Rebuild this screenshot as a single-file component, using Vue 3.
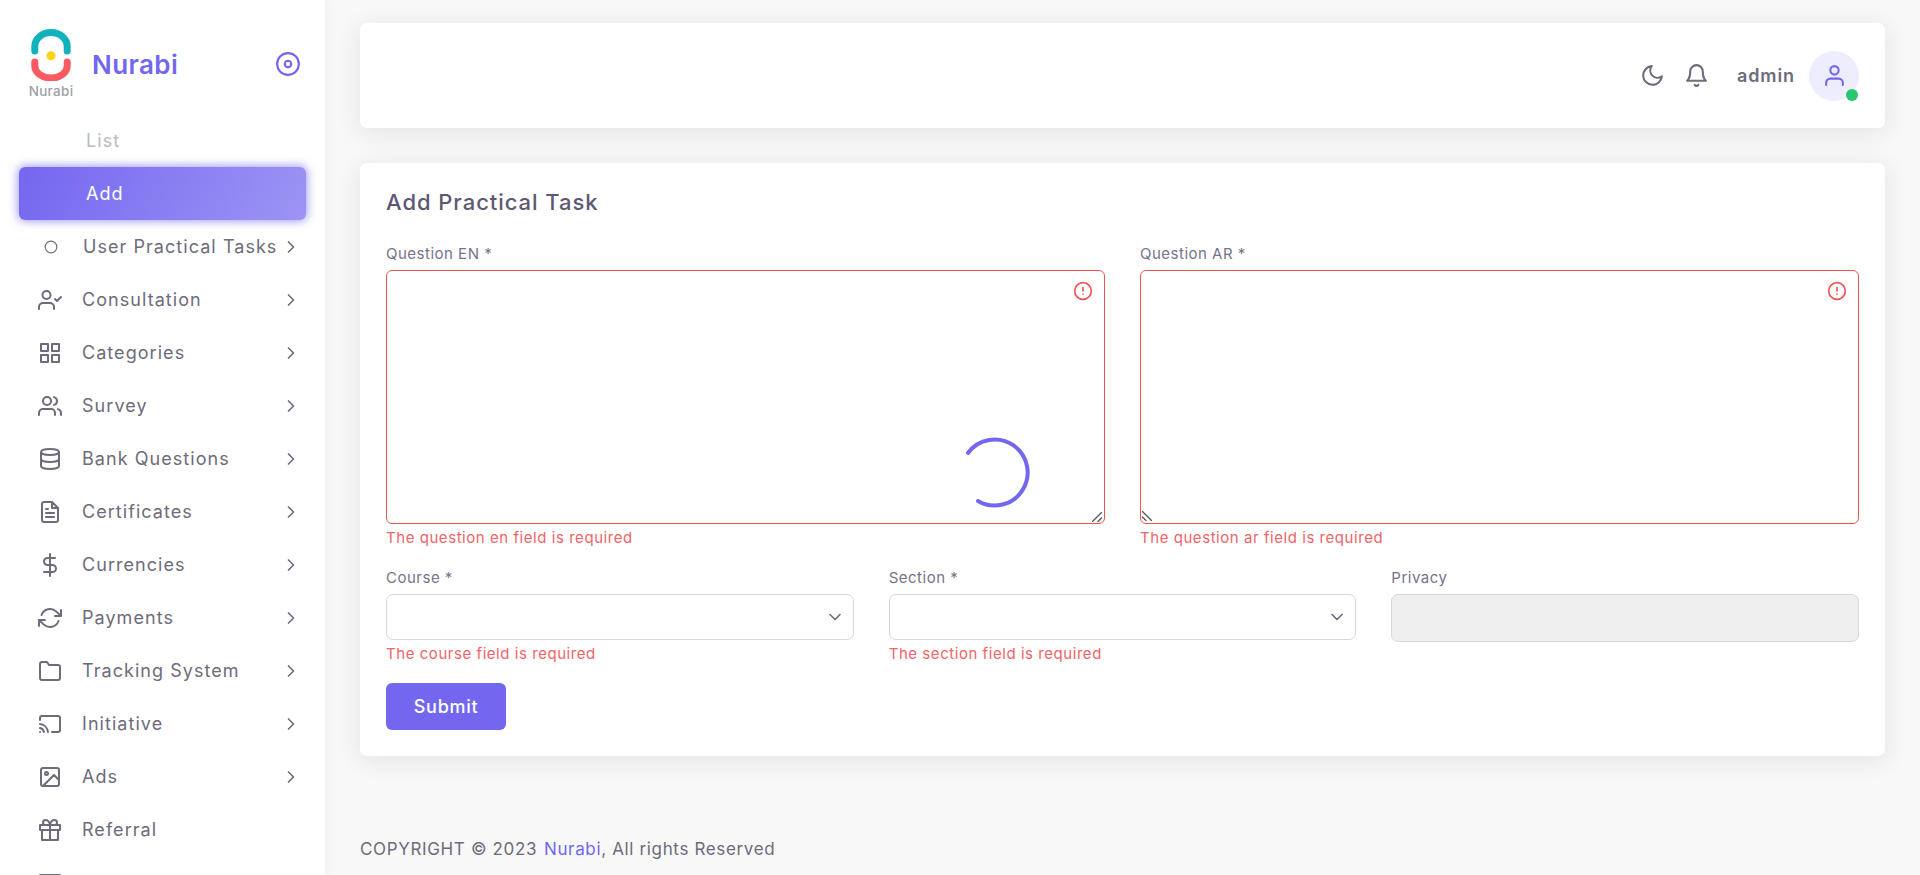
<template>
  <div class="layout">
    <aside class="sidebar">
      <div class="brand">
        <div class="brand-logo">
          <svg width="46" height="52" viewBox="0 0 46 52">
            <path d="M6.8 22V17.5a16.2 14 0 0 1 32.4 0V22" class="logo-teal" />
            <path d="M6.8 33V37a16.2 12 0 0 0 32.4 0V33" class="logo-coral" />
            <circle cx="23" cy="26.7" r="4.5" fill="#fdd31c" />
          </svg>
          <span class="logo-word">Nurabi</span>
        </div>
        <span class="brand-name">Nurabi</span>
        <svg class="brand-toggle" viewBox="0 0 24 24">
          <path :d="icons.disc" />
        </svg>
      </div>
      <ul class="menu">
        <li
          v-for="item in menu"
          :key="item.label"
          class="menu-item"
          :class="{ active: item.active, muted: item.muted, sub: item.sub }"
        >
          <svg v-if="item.icon" class="menu-icon" :class="{ small: item.small }" viewBox="0 0 24 24">
            <path :d="icons[item.icon]" />
          </svg>
          <span class="menu-label">{{ item.label }}</span>
          <svg v-if="item.arrow" class="menu-arrow" viewBox="0 0 24 24">
            <path d="M9 18l6-6-6-6" />
          </svg>
        </li>
      </ul>
    </aside>

    <main class="content">
      <header class="navbar">
        <svg class="nav-icon" viewBox="0 0 24 24"><path :d="icons.moon" /></svg>
        <svg class="nav-icon" viewBox="0 0 24 24"><path :d="icons.bell" /></svg>
        <span class="nav-user">admin</span>
        <div class="avatar">
          <svg class="avatar-icon" viewBox="0 0 24 24"><path :d="icons.user" /></svg>
          <span class="avatar-dot"></span>
        </div>
      </header>

      <section class="card">
        <h4 class="card-title">Add Practical Task</h4>
        <div class="row-two">
          <div class="field">
            <label>Question EN *</label>
            <div class="area-wrap">
              <textarea class="area"></textarea>
              <svg class="area-alert" viewBox="0 0 24 24"><path :d="icons.alert" /></svg>
              <svg class="grip" viewBox="0 0 10 10"><path d="M0 10L10 0M5.5 10L10 5.5" /></svg>
            </div>
            <small class="error">The question en field is required</small>
          </div>
          <div class="field">
            <label>Question AR *</label>
            <div class="area-wrap">
              <textarea class="area" dir="rtl"></textarea>
              <svg class="area-alert" viewBox="0 0 24 24"><path :d="icons.alert" /></svg>
              <svg class="grip grip-left" viewBox="0 0 10 10"><path d="M0 0L10 10M0 5.5L4.5 10" /></svg>
            </div>
            <small class="error">The question ar field is required</small>
          </div>
        </div>
        <div class="row-three">
          <div class="field">
            <label>Course *</label>
            <div class="select">
              <svg class="select-arrow" viewBox="0 0 24 24"><path d="M6 9l6 6 6-6" /></svg>
            </div>
            <small class="error">The course field is required</small>
          </div>
          <div class="field">
            <label>Section *</label>
            <div class="select">
              <svg class="select-arrow" viewBox="0 0 24 24"><path d="M6 9l6 6 6-6" /></svg>
            </div>
            <small class="error">The section field is required</small>
          </div>
          <div class="field">
            <label>Privacy</label>
            <div class="select disabled"></div>
          </div>
        </div>
        <button class="submit" type="button">Submit</button>
      </section>

      <footer class="footer">
        COPYRIGHT © 2023 &nbsp;<span class="footer-link">Nurabi</span>, All rights Reserved
      </footer>
    </main>

    <svg class="spinner" width="80" height="80" viewBox="-40 -40 80 80">
      <path d="M-27 -19A33 33 0 1 1 -17 29" />
    </svg>
  </div>
</template>

<script setup>
const icons = {
  disc: 'M2 12a10 10 0 1 0 20 0a10 10 0 1 0-20 0M9 12a3 3 0 1 0 6 0a3 3 0 1 0-6 0',
  circle: 'M2 12a10 10 0 1 0 20 0a10 10 0 1 0-20 0',
  userCheck: 'M16 21v-2a4 4 0 0 0-4-4H5a4 4 0 0 0-4 4v2M4.5 7a4 4 0 1 0 8 0a4 4 0 1 0-8 0M17 11l2 2 4-4',
  grid: 'M3 3h7v7H3zM14 3h7v7h-7zM14 14h7v7h-7zM3 14h7v7H3z',
  users: 'M17 21v-2a4 4 0 0 0-4-4H5a4 4 0 0 0-4 4v2M5 7a4 4 0 1 0 8 0a4 4 0 1 0-8 0M23 21v-2a4 4 0 0 0-3-3.87M16 3.13a4 4 0 0 1 0 7.75',
  database: 'M3 5c0-1.66 4-3 9-3s9 1.34 9 3s-4 3-9 3s-9-1.34-9-3M21 12c0 1.66-4 3-9 3s-9-1.34-9-3M3 5v14c0 1.66 4 3 9 3s9-1.34 9-3V5',
  file: 'M14 2H6a2 2 0 0 0-2 2v16a2 2 0 0 0 2 2h12a2 2 0 0 0 2-2V8zM14 2v6h6M16 13H8M16 17H8M10 9H8',
  dollar: 'M12 1v22M17 5H9.5a3.5 3.5 0 0 0 0 7h5a3.5 3.5 0 0 1 0 7H6',
  refresh: 'M23 4v6h-6M1 20v-6h6M3.51 9a9 9 0 0 1 14.85-3.36L23 10M1 14l4.64 4.36A9 9 0 0 0 20.49 15',
  folder: 'M22 19a2 2 0 0 1-2 2H4a2 2 0 0 1-2-2V5a2 2 0 0 1 2-2h5l2 3h9a2 2 0 0 1 2 2z',
  cast: 'M2 16.1A5 5 0 0 1 5.9 20M2 12.05A9 9 0 0 1 9.95 20M2 8V6a2 2 0 0 1 2-2h16a2 2 0 0 1 2 2v12a2 2 0 0 1-2 2h-6M2 20h.01',
  image: 'M5 3h14a2 2 0 0 1 2 2v14a2 2 0 0 1-2 2H5a2 2 0 0 1-2-2V5a2 2 0 0 1 2-2zM7 8.5a1.5 1.5 0 1 0 3 0a1.5 1.5 0 1 0-3 0M21 15l-5-5L5 21',
  gift: 'M20 12v10H4V12M2 7h20v5H2zM12 22V7M12 7H7.5a2.5 2.5 0 0 1 0-5C11 2 12 7 12 7zM12 7h4.5a2.5 2.5 0 0 0 0-5C13 2 12 7 12 7z',
  card: 'M3 4h18a2 2 0 0 1 2 2v12a2 2 0 0 1-2 2H3a2 2 0 0 1-2-2V6a2 2 0 0 1 2-2zM1 10h22',
  moon: 'M21 12.79A9 9 0 1 1 11.21 3 7 7 0 0 0 21 12.79z',
  bell: 'M18 8A6 6 0 0 0 6 8c0 7-3 9-3 9h18s-3-2-3-9M13.73 21a2 2 0 0 1-3.46 0',
  user: 'M20 21v-2a4 4 0 0 0-4-4H8a4 4 0 0 0-4 4v2M8 7a4 4 0 1 0 8 0a4 4 0 1 0-8 0',
  alert: 'M2 12a10 10 0 1 0 20 0a10 10 0 1 0-20 0M12 8v4M12 16h.01'
}

const menu = [
  { label: 'List', sub: true, muted: true },
  { label: 'Add', sub: true, active: true },
  { label: 'User Practical Tasks', icon: 'circle', small: true, arrow: true },
  { label: 'Consultation', icon: 'userCheck', arrow: true },
  { label: 'Categories', icon: 'grid', arrow: true },
  { label: 'Survey', icon: 'users', arrow: true },
  { label: 'Bank Questions', icon: 'database', arrow: true },
  { label: 'Certificates', icon: 'file', arrow: true },
  { label: 'Currencies', icon: 'dollar', arrow: true },
  { label: 'Payments', icon: 'refresh', arrow: true },
  { label: 'Tracking System', icon: 'folder', arrow: true },
  { label: 'Initiative', icon: 'cast', arrow: true },
  { label: 'Ads', icon: 'image', arrow: true },
  { label: 'Referral', icon: 'gift' },
  { label: 'Wallet', icon: 'card' }
]
</script>

<style>
html,
body {
  margin: 0;
  height: 100%;
  overflow: hidden;
  background: #f8f8f8;
}
</style>

<style scoped>
.layout {
  position: relative;
  display: flex;
  height: 875px;
  overflow: hidden;
  font-family: Inter, "Noto Sans", sans-serif;
  color: #6e6b7b;
  background: #f8f8f8;
}

svg path {
  fill: none;
  stroke: currentColor;
  stroke-width: 2;
  stroke-linecap: round;
  stroke-linejoin: round;
}

.sidebar {
  flex: 0 0 325px;
  height: 875px;
  overflow: hidden;
  background: #fff;
  box-shadow: 0 0 15px 0 rgba(34, 41, 47, 0.05);
}

.brand {
  display: flex;
  align-items: center;
  height: 114px;
  padding: 14px 24px 0 28px;
  box-sizing: border-box;
}

.brand-logo {
  display: flex;
  flex-direction: column;
  align-items: center;
  width: 46px;
}

.brand-logo svg {
  display: block;
}

svg .logo-teal {
  stroke: #10b3bb;
  stroke-width: 7;
}

svg .logo-coral {
  stroke: #fb5a60;
  stroke-width: 7;
}

.logo-word {
  margin-top: 2px;
  font-size: 13.5px;
  line-height: 16px;
  font-weight: 500;
  letter-spacing: 0.3px;
  color: #9ea1a5;
}

.brand-name {
  flex: 1;
  margin-left: 18px;
  font-size: 26px;
  font-weight: 600;
  letter-spacing: 0.4px;
  color: #7367f0;
}

.brand-toggle {
  color: #7367f0;
  width: 26px;
  height: 26px;
}

.menu {
  list-style: none;
  margin: 0;
  padding: 0;
}

.menu-item {
  display: flex;
  align-items: center;
  height: 53px;
  margin: 0 19px;
  padding: 0 5px 0 19px;
  box-sizing: border-box;
  border-radius: 6px;
  font-size: 18px;
  letter-spacing: 1.05px;
  color: #6e6b7b;
}

.menu-item.sub {
  padding-left: 67px;
}

.menu-item.muted {
  color: #b9b9c3;
}

.menu-item.active {
  color: #fff;
  background: linear-gradient(118deg, #7367f0, rgba(115, 103, 240, 0.7));
  box-shadow: 0 0 10px 1px rgba(115, 103, 240, 0.7);
}

.menu-icon {
  flex: 0 0 24px;
  width: 24px;
  height: 24px;
  margin-right: 20px;
}

.menu-icon.small {
  height: 14px;
  margin-left: 1px;
}

.menu-label {
  flex: 1;
  white-space: nowrap;
}

.menu-arrow {
  flex: 0 0 20px;
  width: 20px;
  height: 20px;
}

.content {
  flex: 1;
  min-width: 0;
  padding: 23px 35px 0;
}

.navbar {
  display: flex;
  align-items: center;
  height: 105px;
  padding: 0 26px;
  box-sizing: border-box;
  border-radius: 7px;
  background: #fff;
  box-shadow: 0 4px 24px 0 rgba(34, 41, 47, 0.1);
}

.nav-icon {
  width: 25px;
  height: 25px;
  margin-right: 19px;
  color: #6e6b7b;
}

.nav-icon:first-child {
  margin-left: auto;
}

.nav-user {
  margin-left: 9px;
  margin-right: 14px;
  font-size: 18px;
  font-weight: 600;
  letter-spacing: 0.9px;
}

.avatar {
  position: relative;
  display: flex;
  align-items: center;
  justify-content: center;
  width: 50px;
  height: 50px;
  border-radius: 50%;
  background: #eeedfd;
  color: #7367f0;
}

.avatar-icon {
  width: 25px;
  height: 25px;
}

.avatar-dot {
  position: absolute;
  right: 1px;
  bottom: 0;
  width: 12px;
  height: 12px;
  border-radius: 50%;
  background: #28c76f;
}

.card {
  margin-top: 35px;
  padding: 24px 26px 26px;
  border-radius: 7px;
  background: #fff;
  box-shadow: 0 4px 24px 0 rgba(34, 41, 47, 0.1);
}

.card-title {
  margin: 0 0 27px;
  font-size: 22px;
  line-height: 30px;
  font-weight: 450;
  letter-spacing: 0.95px;
  color: #5e5873;
}

.row-two {
  display: grid;
  grid-template-columns: 1fr 1fr;
  gap: 35px;
}

.row-three {
  display: grid;
  grid-template-columns: 1fr 1fr 1fr;
  gap: 35px;
  margin-top: 20px;
}

.field {
  min-width: 0;
}

label {
  display: block;
  margin-bottom: 6px;
  font-size: 15px;
  line-height: 20px;
  letter-spacing: 0.5px;
  color: #76738a;
}

.area-wrap {
  position: relative;
}

.area {
  display: block;
  width: 100%;
  height: 254px;
  box-sizing: border-box;
  border: 1px solid #ea5455;
  border-radius: 6px;
  outline: none;
  background: #fff;
  resize: none;
}

.area-alert {
  position: absolute;
  top: 11px;
  right: 12px;
  width: 20px;
  height: 20px;
  color: #ea5455;
}

.grip {
  position: absolute;
  right: 3px;
  bottom: 2px;
  width: 10px;
  height: 10px;
  color: #555;
}

.grip path {
  stroke-width: 1.3;
  stroke-linecap: butt;
}

.grip-left {
  left: 2px;
  right: auto;
  bottom: 3px;
}

.error {
  display: block;
  margin-top: 4px;
  font-size: 15px;
  line-height: 20px;
  letter-spacing: 0.55px;
  color: #ee6566;
}

.select {
  position: relative;
  display: flex;
  align-items: center;
  justify-content: flex-end;
  height: 46px;
  padding-right: 8px;
  box-sizing: border-box;
  border: 1px solid #d8d6de;
  border-radius: 7px;
  background: #fff;
}

.select.disabled {
  height: 48px;
  background: #efefef;
}

.select-arrow {
  width: 20px;
  height: 20px;
  color: #6e6b7b;
}

.submit {
  display: block;
  width: 120px;
  height: 47px;
  margin-top: 19px;
  border: 0;
  border-radius: 6px;
  background: #7367f0;
  color: #fff;
  font-family: inherit;
  font-size: 18px;
  font-weight: 500;
  letter-spacing: 0.7px;
}

.footer {
  margin-top: 81px;
  font-size: 17px;
  line-height: 24px;
  letter-spacing: 0.65px;
  color: #6e6b7b;
}

.footer-link {
  margin-left: -4px;
  color: #7367f0;
}

.spinner {
  position: absolute;
  left: 955px;
  top: 432px;
  color: #7367f0;
}

.spinner path {
  stroke-width: 4;
}
</style>
